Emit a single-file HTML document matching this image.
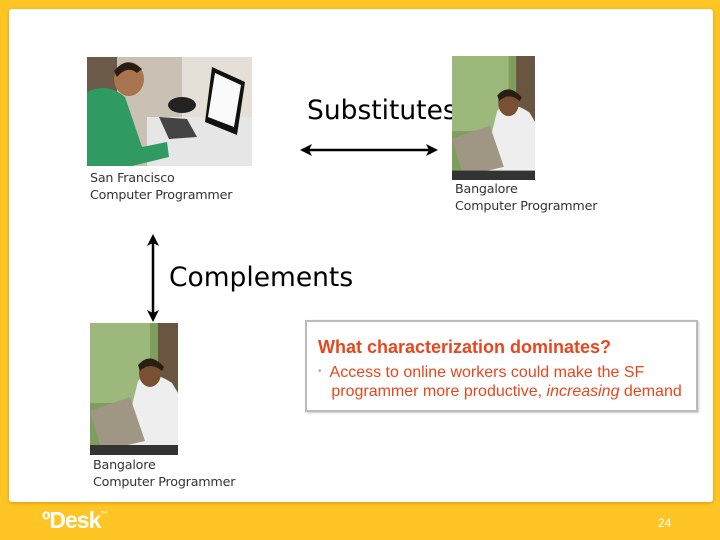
<!DOCTYPE html>
<html><head><meta charset="utf-8"><style>
body{margin:0;width:720px;height:540px;overflow:hidden;background:#fec524;position:relative;font-family:"DejaVu Sans","Liberation Sans",sans-serif}
.panel{position:absolute;left:9px;top:9px;width:704px;height:493px;background:#fff;border-radius:3px;box-shadow:0 1px 3px rgba(150,90,0,.4)}
.abs{position:absolute}
.cap{font-family:"DejaVu Sans",sans-serif;font-size:12.7px;line-height:17px;color:#333;letter-spacing:-0.2px}
.big{font-family:"DejaVu Sans",sans-serif;color:#000}
.box{left:305px;top:320px;width:389px;height:88px;border:2px solid #bbb;background:#fff;box-shadow:1px 1px 2px #ccc}
</style></head><body>
<div class="panel"></div>

<div class="abs big" style="left:307px;top:95px;font-size:26.5px">Substitutes</div>

<svg class="abs" style="left:87px;top:57px" width="165" height="109" viewBox="0 0 165 109">
<rect width="165" height="109" fill="#c9c2b4"/>
<rect x="0" y="0" width="30" height="109" fill="#6b5a48"/>
<rect x="95" y="0" width="70" height="109" fill="#e4e0d8"/>
<rect x="60" y="60" width="105" height="49" fill="#e6e6e6"/>
<polygon points="125,10 158,25 150,78 118,65" fill="#111"/>
<polygon points="128,16 154,28 147,70 121,60" fill="#fafafa"/>
<polygon points="72,60 100,62 110,80 82,82" fill="#444"/>
<ellipse cx="95" cy="48" rx="14" ry="8" fill="#222"/>
<path d="M0,35 Q20,25 38,40 L55,90 L80,85 L82,100 L45,109 L0,109 Z" fill="#2f9a62"/>
<ellipse cx="42" cy="22" rx="15" ry="17" fill="#a8754f"/>
<path d="M27,14 Q40,-2 55,12 L50,16 Q40,8 30,20 Z" fill="#2a1e14"/>
</svg>
<div class="abs cap" style="left:90px;top:169px">San Francisco<br>Computer Programmer</div>

<svg width="0" height="0" style="position:absolute"><defs>
<g id="bp">
<rect width="88" height="132" fill="#7f9e5e"/>
<rect x="0" y="0" width="60" height="80" fill="#9cb87a"/>
<rect x="68" y="0" width="20" height="70" fill="#6a5640"/>
<path d="M48,58 Q60,45 82,60 L88,70 L88,132 L30,132 Z" fill="#eee"/>
<ellipse cx="60" cy="50" rx="11" ry="14" fill="#7a5034"/>
<path d="M48,42 Q60,28 74,44 L72,48 Q60,38 50,48 Z" fill="#2a1e14"/>
<polygon points="0,88 40,74 55,118 12,128" fill="#9f9784"/>
<rect x="0" y="122" width="88" height="10" fill="#333"/>
</g></defs></svg>
<svg class="abs" style="left:452px;top:56px" width="83" height="124" viewBox="0 0 88 132" preserveAspectRatio="none"><use href="#bp"/></svg>
<svg class="abs" style="left:90px;top:323px" width="88" height="132" viewBox="0 0 88 132"><use href="#bp"/></svg>

<div class="abs cap" style="left:455px;top:180px">Bangalore<br>Computer Programmer</div>
<div class="abs cap" style="left:93px;top:456px">Bangalore<br>Computer Programmer</div>
<div class="abs big" style="left:169px;top:262px;font-size:26.5px">Complements</div>

<svg class="abs" style="left:298px;top:140px" width="142" height="20"><line x1="6" y1="10" x2="136" y2="10" stroke="#000" stroke-width="2.5"/><polygon points="2,10 14,4 11,10 14,16" fill="#000"/><polygon points="140,10 128,4 131,10 128,16" fill="#000"/></svg>
<svg class="abs" style="left:143px;top:232px" width="20" height="92"><line x1="10" y1="6" x2="10" y2="86" stroke="#000" stroke-width="2.5"/><polygon points="10,2 4,14 10,11 16,14" fill="#000"/><polygon points="10,90 4,78 10,81 16,78" fill="#000"/></svg>

<div class="abs box">
<div style="position:absolute;left:11px;top:15px;font-family:'Liberation Sans',sans-serif;font-weight:bold;font-size:18px;color:#e8461e;white-space:nowrap">What characterization dominates?</div>
<div style="position:absolute;left:11px;top:40px;font-family:'Liberation Sans',sans-serif;font-size:16px;line-height:19px;color:#e8461e;white-space:nowrap"><span style="color:#aaa;font-size:10px;vertical-align:3px">•</span>&nbsp; Access to online workers could make the SF<br>&nbsp;&nbsp;&nbsp;programmer more productive, <i>increasing</i> demand</div>
</div>

<div class="abs" style="left:42px;top:507px;font-family:'Liberation Sans',sans-serif;font-weight:bold;font-size:23px;color:#fff;letter-spacing:-1px">ºDesk<span style="font-size:7px;vertical-align:12px">™</span></div>
<div class="abs" style="left:658px;top:516px;font-family:'Liberation Sans',sans-serif;font-size:12px;color:#fff">24</div>
</body></html>
